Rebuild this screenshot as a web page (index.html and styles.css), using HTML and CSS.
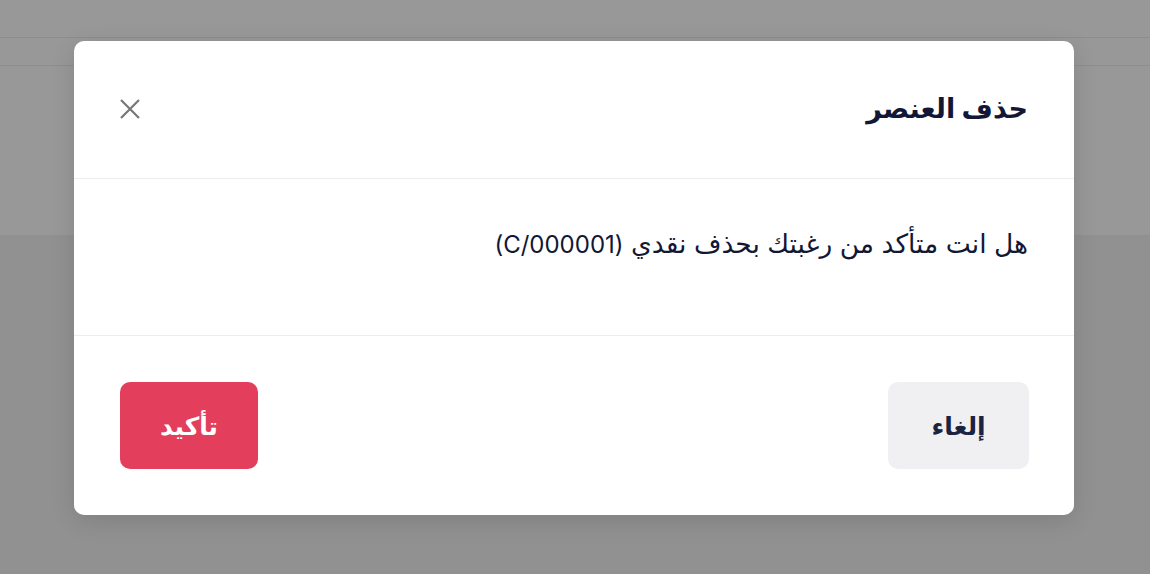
FILE: index.html
```html
<!DOCTYPE html>
<html lang="ar">
<head>
<meta charset="utf-8">
<link rel="stylesheet" href="styles.css">
</head>
<body>
<div class="page">
  <div class="topbar"></div>
  <div class="subbar"></div>
  <div class="panel"></div>
</div>
<div class="overlay">
  <div class="modal" dir="rtl">
    <div class="modal-header">
      <h2 class="title">حذف العنصر</h2>
      <button class="close" aria-label="close">
        <svg width="24" height="24" viewBox="0 0 24 24"><path d="M3 3L21 21M21 3L3 21" stroke="#777" stroke-width="2.2" stroke-linecap="butt" fill="none"/></svg>
      </button>
    </div>
    <div class="modal-body">
      <p class="message">هل انت متأكد من رغبتك بحذف نقدي <span class="code">(C/000001)</span></p>
    </div>
    <div class="modal-footer">
      <button class="btn btn-cancel">إلغاء</button>
      <button class="btn btn-confirm">تأكيد</button>
    </div>
  </div>
</div>
</body>
</html>
```
FILE: styles.css
```css
* { box-sizing: border-box; }
html, body { margin: 0; padding: 0; }
body {
  width: 1150px;
  height: 574px;
  overflow: hidden;
  background: #f2f2f2;
  font-family: Inter, "Noto Sans", "DejaVu Sans", sans-serif;
  position: relative;
}
.page { display: flex; flex-direction: column; }
.topbar { height: 38px; background: #fdfdfd; border-bottom: 1px solid #ececec; }
.subbar { height: 28px; background: #fdfdfd; border-bottom: 1px solid #ececec; }
.panel { height: 170px; background: #fdfdfd; border-bottom: 1px solid #f0f0f0; }
.overlay {
  position: absolute;
  inset: 0;
  background: rgba(0, 0, 0, 0.4);
  display: flex;
  justify-content: flex-start;
  align-items: flex-start;
  padding: 41px 0 0 74px;
}
.modal {
  width: 1000px;
  background: #fff;
  border-radius: 10px;
  box-shadow: 0 6px 24px rgba(0,0,0,0.12);
}
.modal-header {
  height: 138px;
  display: flex;
  align-items: center;
  justify-content: space-between;
  padding: 0 46px 0 44px;
  border-bottom: 1px solid #ececec;
}
.title {
  margin: 0 0 3px;
  font-size: 27px;
  font-weight: 700;
  color: #111735;
  line-height: 1;
}
.close {
  background: none;
  border: 0;
  padding: 0;
  width: 24px;
  height: 24px;
  display: flex;
  cursor: pointer;
  margin-bottom: 2px;
}
.modal-body {
  height: 157px;
  padding: 46px 46px 0;
  border-bottom: 1px solid #ececec;
}
.message {
  margin: 0;
  font-size: 26.5px;
  line-height: 36px;
  color: #111735;
}
.code { font-size: 24px; }
.modal-footer {
  display: flex;
  justify-content: space-between;
  padding: 46px 45px 46px 46px;
}
.btn {
  height: 87px;
  border: 0;
  border-radius: 10px;
  font-family: inherit;
  font-size: 25px;
  font-weight: 700;
  cursor: pointer;
}
.btn-cancel { width: 141px; background: #f0f0f3; color: #1c2340; }
.btn-confirm { width: 138px; background: #e33e5c; color: #fff; }
```
